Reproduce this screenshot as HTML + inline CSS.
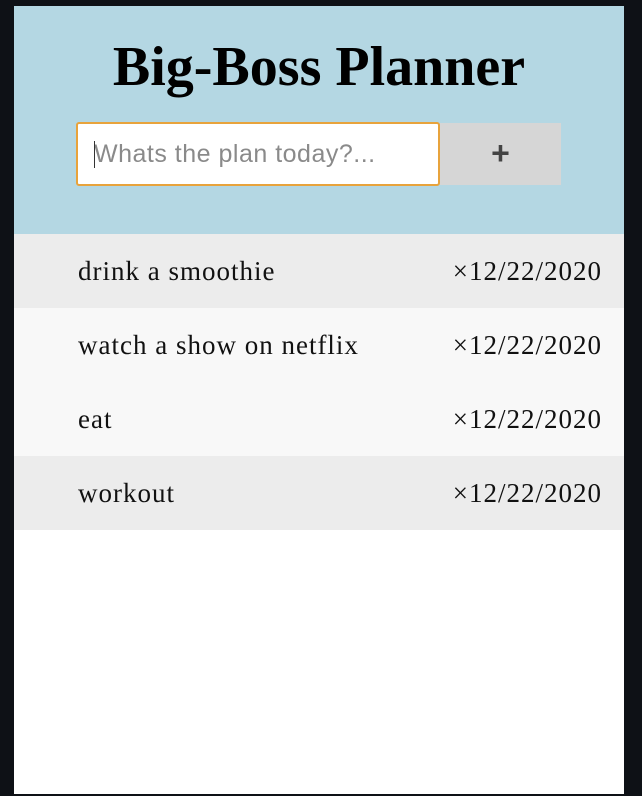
<!DOCTYPE html>
<html><head><style>
body{margin:0;width:642px;height:796px;background:#0e1116;overflow:hidden;font-family:"Liberation Serif",serif;}
.panel{position:absolute;left:14px;top:6px;width:610px;height:788px;background:#fff;}
.hdr{position:absolute;left:0;top:0;width:610px;height:228px;background:#b4d7e3;}
h1{position:absolute;left:0;width:610px;top:31px;margin:0;text-align:center;font-size:56px;font-weight:bold;line-height:60px;color:#000;}
.inp{position:absolute;left:62px;top:116px;width:364px;height:64px;box-sizing:border-box;border:2px solid #e8a33c;border-radius:3px;background:#fff;font-family:"Liberation Sans",sans-serif;font-size:25px;letter-spacing:0.5px;color:#8a8a8a;line-height:60px;padding-left:16px;white-space:nowrap;}
.inp:before{content:"";position:absolute;left:16px;top:17px;width:1px;height:27px;background:#333;}
.btn{position:absolute;left:426px;top:117px;width:121px;height:62px;background:#d6d6d6;text-align:center;font-family:"Liberation Sans",sans-serif;font-size:32px;font-weight:bold;color:#444;line-height:60px;}
.row{position:absolute;left:0;width:610px;height:74px;font-size:27px;letter-spacing:1px;line-height:74px;color:#111;white-space:nowrap;}
.row .t{position:absolute;left:64px;}
.row .d{position:absolute;right:22px;}
</style></head><body>
<div class="panel">
<div class="hdr">
<h1>Big-Boss Planner</h1>
<div class="inp">Whats the plan today?...</div>
<div class="btn">+</div>
</div>
<div class="row" style="top:228px;background:#ececec"><span class="t">drink a smoothie</span><span class="d">×12/22/2020</span></div>
<div class="row" style="top:302px;background:#f8f8f8"><span class="t">watch a show on netflix</span><span class="d">×12/22/2020</span></div>
<div class="row" style="top:376px;background:#f8f8f8"><span class="t">eat</span><span class="d">×12/22/2020</span></div>
<div class="row" style="top:450px;background:#ececec"><span class="t">workout</span><span class="d">×12/22/2020</span></div>
</div>
</body></html>
